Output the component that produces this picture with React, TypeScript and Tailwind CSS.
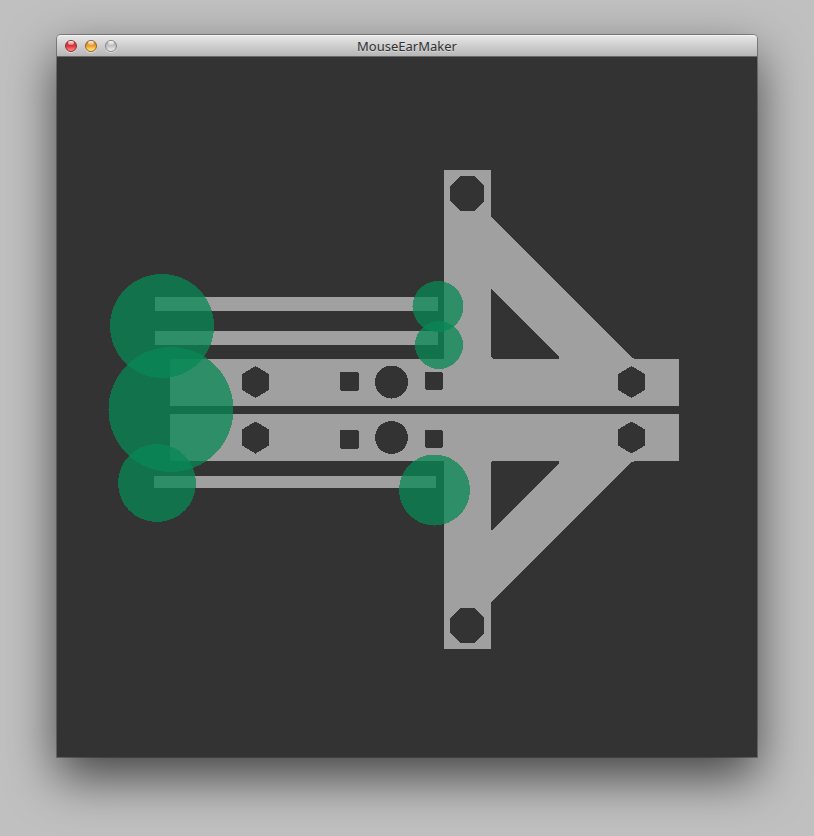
const windowButtons = [
  {
    label: "Close",
    look: "border-[#8a3034] bg-linear-to-b from-[#b8434a] via-[#e02c38] to-[#ff8a8c]",
  },
  {
    label: "Minimize",
    look: "border-[#8f6028] bg-linear-to-b from-[#c07a30] via-[#f0a028] to-[#fff07c]",
  },
  {
    label: "Zoom",
    look: "border-[#858585] bg-linear-to-b from-[#a8a8a8] via-[#c2c2c2] to-[#f0f0f0]",
  },
];

// Raft discs laid over the corners of the part to stop it from lifting.
const ears = [
  { cx: 105, cy: 269, r: 52 },
  { cx: 114, cy: 352.5, r: 62.5 },
  { cx: 100, cy: 426, r: 39 },
  { cx: 381, cy: 249.5, r: 25.5 },
  { cx: 382, cy: 288, r: 24 },
  { cx: 377.5, cy: 433, r: 35.5 },
];

const hexagon = "0,-16 13.5,-8 13.5,8 0,16 -13.5,8 -13.5,-8";
const octagon = "-7,-17.5 7,-17.5 17,-7.5 17,7.5 7,17.5 -7,17.5 -17,7.5 -17,-7.5";

function TitleBar() {
  return (
    <header className="relative flex h-[22px] items-center justify-center rounded-t border-t border-b border-t-[#f4f4f4] border-b-[#686868] bg-linear-to-b from-[#e6e6e6] to-[#b6b6b6]">
      <div className="absolute left-2 flex gap-2">
        {windowButtons.map((b) => (
          <button
            key={b.label}
            type="button"
            aria-label={b.label}
            className={`flex size-3 justify-center rounded-full border shadow-[0_1px_0_rgba(255,255,255,0.5)] ${b.look}`}
          >
            <span className="h-1 w-1.5 rounded-full bg-linear-to-b from-white/90 to-white/30" />
          </button>
        ))}
      </div>
      <h1 className="font-['Noto_Sans','Open_Sans',sans-serif] text-[13px] leading-5 text-[#303030] [text-shadow:0_1px_0_rgba(255,255,255,0.4)]">
        MouseEarMaker
      </h1>
    </header>
  );
}

function Part() {
  return (
    <svg
      viewBox="0 0 700 700"
      shapeRendering="crispEdges"
      role="img"
      aria-label="Part outline with mouse ears"
      className="block h-auto w-full bg-[#333333]"
    >
      <g fill="#a0a0a0">
        <rect x="98" y="240" width="283" height="14" />
        <rect x="98" y="274" width="283" height="14" />
        <rect x="97" y="419" width="282" height="12" />
        <path
          fillRule="evenodd"
          d="M387 113H434V159L435 161L573 299L575 301L578 302H622V349H113V302H387ZM434 232V300L436 302H501L502 301V299Z"
        />
        <path
          fillRule="evenodd"
          d="M113 357H622V404H578L573 406L435 544L434 547V592H387V404H113ZM434 405V473H435L502 406V404H435Z"
        />
      </g>
      <g fill="#333333">
        {[325, 380.5].map((y) => (
          <g key={y}>
            <polygon points={hexagon} transform={`translate(198.5 ${y})`} />
            <polygon points={hexagon} transform={`translate(574.5 ${y})`} />
            <circle cx="334.5" cy={y} r="16.5" />
          </g>
        ))}
        {[315, 373].map((y) => (
          <g key={y}>
            <path d={`M283 ${y}h18v1h1v17h-1v1h-17v-1h-1z`} />
            <path d={`M368 ${y}h17v1h1v16h-1v1h-16v-1h-1z`} />
          </g>
        ))}
        <polygon points={octagon} transform="translate(410 136.5)" />
        <polygon points={octagon} transform="translate(410 568.5)" />
      </g>
      <g fill="#088856" fillOpacity="0.75">
        {ears.map((e) => (
          <circle key={e.cy} cx={e.cx} cy={e.cy} r={e.r} />
        ))}
      </g>
    </svg>
  );
}

export default function App() {
  return (
    <main className="min-h-screen overflow-hidden bg-[#c0c0c0] px-[57px] pt-[35px] pb-[79px]">
      <section className="rounded-t shadow-[0_0_0_1px_rgba(0,0,0,0.3),0_20px_50px_rgba(0,0,0,0.65)]">
        <TitleBar />
        <Part />
      </section>
    </main>
  );
}
